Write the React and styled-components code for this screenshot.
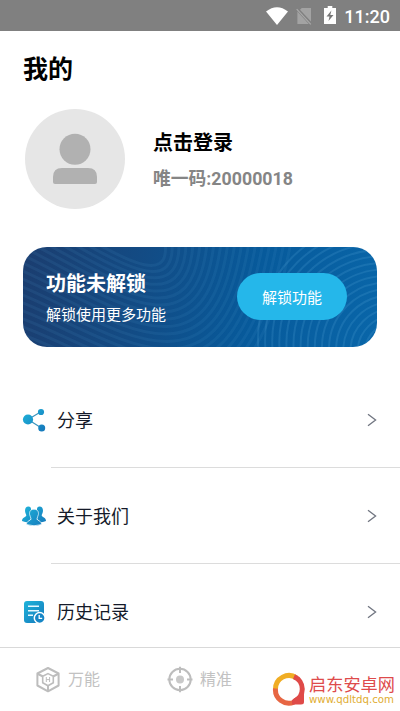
import React from "react";
import styled, { createGlobalStyle } from "styled-components";

const GlobalStyle = createGlobalStyle`
  * {
    box-sizing: border-box;
  }
  body {
    margin: 0;
    background: #fff;
    font-family: Roboto, "Noto Sans CJK SC", sans-serif;
  }
`;

const Screen = styled.div`
  display: flex;
  flex-direction: column;
  width: 100%;
  height: 711px;
  overflow: hidden;
  background: #fff;
`;

const StatusBar = styled.header`
  display: flex;
  flex: none;
  align-items: center;
  justify-content: flex-end;
  height: 31px;
  padding: 0 10px 0 0;
  background: #808080;
`;

const Clock = styled.span`
  margin: 3px 0 0 8px;
  color: #fff;
  font-size: 18px;
  font-weight: 500;
  line-height: 20px;
`;

const Content = styled.main`
  display: flex;
  flex: 1;
  flex-direction: column;
  min-height: 0;
`;

const Title = styled.h1`
  flex: none;
  margin: 21px 0 0 23px;
  color: #000;
  font-size: 25px;
  font-weight: 700;
  line-height: 36px;
`;

const Profile = styled.section`
  display: flex;
  flex: none;
  align-items: center;
  gap: 28px;
  height: 100px;
  margin: 21px 0 0 25px;
`;

const ProfileText = styled.div`
  display: flex;
  flex-direction: column;
  gap: 8px;
  padding-top: 1px;
`;

const LoginText = styled.div`
  color: #000;
  font-size: 20px;
  font-weight: 700;
  line-height: 30px;
`;

const UserCode = styled.div`
  color: #858585;
  font-size: 17.8px;
  font-weight: 700;
  line-height: 26px;
`;

const Card = styled.section`
  position: relative;
  display: flex;
  flex: none;
  align-items: center;
  justify-content: space-between;
  height: 100px;
  margin: 38px 23px 0;
  padding: 0 30px 0 23px;
  overflow: hidden;
  border-radius: 24px;
  background: linear-gradient(100deg, #1b3d6f 0%, #134b84 32%, #075a9b 65%, #0966a9 100%);
`;

const CardWaves = styled.svg`
  position: absolute;
  inset: 0;
`;

const CardText = styled.div`
  position: relative;
  color: #fff;
`;

const CardTitle = styled.div`
  font-size: 20px;
  font-weight: 700;
  line-height: 32px;
`;

const CardHint = styled.div`
  margin-top: 4px;
  font-size: 15px;
  line-height: 22px;
`;

const UnlockButton = styled.button`
  position: relative;
  width: 110px;
  height: 47px;
  margin-bottom: 2px;
  padding: 0;
  border: none;
  border-radius: 24px;
  background: #25b7ea;
  color: #fff;
  font-family: inherit;
  font-size: 15px;
`;

const Menu = styled.nav`
  display: flex;
  flex: none;
  flex-direction: column;
  margin-top: 25px;
`;

const MenuItem = styled.div`
  display: flex;
  align-items: center;
  height: 96px;
  padding: 0 23px 1px 22px;
`;

const MenuLabel = styled.span`
  flex: 1;
  margin-left: 11px;
  padding-top: 2px;
  color: #141a29;
  font-size: 18px;
  line-height: 26px;
`;

const Divider = styled.div`
  height: 1px;
  margin: -1px 0 0 51px;
  background: #dcdcdc;
`;

const TabBar = styled.footer`
  display: flex;
  flex: none;
  align-items: center;
  height: 64px;
  padding-left: 35px;
  border-top: 1px solid #d9d9d9;
  background: #fff;
`;

const Tab = styled.div`
  display: flex;
  align-items: center;
  gap: 7px;
  width: 132px;
  color: #c2c2c2;
  font-size: 16px;
  line-height: 24px;
`;

const Brand = styled.div`
  display: flex;
  align-items: center;
  margin: 18px 0 0 -27px;
`;

const BrandText = styled.div`
  display: flex;
  flex-direction: column;
  margin: 3px 0 0 3px;
  white-space: nowrap;
`;

const BrandName = styled.span`
  color: #de4b4b;
  font-size: 17.2px;
  line-height: 18px;
`;

const BrandUrl = styled.span`
  color: #dfad31;
  font-family: "DejaVu Sans", sans-serif;
  font-size: 10.2px;
  line-height: 11px;
`;

const NoSim = styled.svg`
  margin-left: 8px;
`;

const Battery = styled.svg`
  margin-left: 12px;
`;

const WifiIcon = () => (
  <svg width="22" height="18" viewBox="0 0 22 18">
    <path d="M0 4.5Q11-4 22 4.5L11 18z" fill="#fff" />
  </svg>
);

const NoSimIcon = () => (
  <NoSim width="16" height="18" viewBox="0 0 16 18">
    <path d="M5.8 1H15V14.6L4 2.8zM1.4 4.6L12.8 17H1.4z" fill="#a3a3a3" />
    <path d="M.7 2.2L14.8 17.4" stroke="#a9a9a9" strokeWidth="1.2" />
  </NoSim>
);

const BatteryIcon = () => (
  <Battery width="12" height="20" viewBox="0 0 12 20">
    <path d="M3.7 0h4.6v2H12v16H0V2h3.7z" fill="#fff" />
    <path d="M7.4 4.5L2.5 10.5h3L4.5 15l5-6H6.3z" fill="#777" />
  </Battery>
);

const Avatar = () => (
  <svg width="100" height="100" viewBox="0 0 100 100">
    <circle cx="50" cy="50" r="50" fill="#e6e6e6" />
    <circle cx="50" cy="40.3" r="15.5" fill="#b1b1b1" />
    <path d="M28 73V68Q28 59 37 59H63Q72 59 72 68V73Q72 75 70 75H30Q28 75 28 73z" fill="#b1b1b1" />
  </svg>
);

const Waves = () => (
  <CardWaves width="354" height="100" viewBox="0 0 354 100" fill="none">
    <g stroke="#5aa5d6" strokeOpacity="0.1" strokeWidth="3">
      {Array.from({ length: 19 }, (_, k) => (
        <path
          key={k}
          d={`M-5 ${8 * k - 50}C${60 + 2 * k} ${8 * k - 15} ${150 + 4 * k} ${55 + 10 * k} ${142 + 7 * k} -5`}
        />
      ))}
    </g>
    <g stroke="#5aa8de" strokeOpacity="0.2" strokeWidth="2">
      {Array.from({ length: 16 }, (_, k) => (
        <circle key={k} cx={350 + k * 1.6} cy={92 + k} r={115 - k * 5.5} />
      ))}
    </g>
  </CardWaves>
);

const Blues = ({ id }) => (
  <defs>
    <linearGradient id={id} x1="0" y1="0" x2="24" y2="24" gradientUnits="userSpaceOnUse">
      <stop stopColor="#20b8dc" />
      <stop offset="1" stopColor="#1474b9" />
    </linearGradient>
  </defs>
);

const ShareIcon = () => (
  <svg width="24" height="24" viewBox="0 0 24 24" fill="url(#share)">
    <Blues id="share" />
    <path d="M6 11.5L18.5 4M6 11.5L19.5 20" stroke="#3a94bd" strokeWidth="1.2" />
    <circle cx="6" cy="11.5" r="5.1" />
    <circle cx="19" cy="4" r="3.1" />
    <circle cx="19.7" cy="20" r="3.5" />
  </svg>
);

const PeopleIcon = () => (
  <svg width="24" height="24" viewBox="0 0 24 24" fill="url(#people)">
    <Blues id="people" />
    <path d="M6.5 2.5C3.5 2.5 2.8 5.2 3.1 7.6C3.3 9.5 4.2 10.3 4.3 11.5C4.2 13.3 0 13 0 17Q3 18.5 6 18L9 14.5V5Q9 2.5 6.5 2.5z" />
    <path d="M17.5 2.5C20.5 2.5 21.2 5.2 20.9 7.6C20.7 9.5 19.8 10.3 19.7 11.5C19.8 13.3 24 13 24 17Q21 18.5 18 18L15 14.5V5Q15 2.5 17.5 2.5z" />
    <path
      d="M12 5.2C8.5 5.2 7.2 7.6 7.6 10.5C7.8 12.4 9 13.2 9 14.8C8.9 17 4.5 16.3 4.5 20.5Q12 23 19.5 20.5C19.5 16.3 15.1 17 15 14.8C15 13.2 16.2 12.4 16.4 10.5C16.8 7.6 15.5 5.2 12 5.2z"
      stroke="#fff"
      strokeWidth="0.7"
    />
  </svg>
);

const HistoryIcon = () => (
  <svg width="24" height="24" viewBox="0 0 24 24" fill="none">
    <Blues id="history" />
    <rect x="2" y="1" width="20" height="22" rx="3" fill="url(#history)" />
    <path d="M6 6.2H17M6 10.8H17M6 15.3H11" stroke="#e7f8ff" strokeWidth="1.5" />
    <circle cx="17.7" cy="18" r="5.4" fill="#1686c6" stroke="#fff" strokeWidth="1.5" />
    <path d="M17.2 15V18.4H20.2" stroke="#fff" strokeWidth="1.3" />
  </svg>
);

const Chevron = () => (
  <svg width="10" height="14" viewBox="0 0 10 14" fill="none">
    <path d="M1 1.2L8.6 7L1 12.8" stroke="#707580" strokeWidth="1.3" />
  </svg>
);

const CubeIcon = () => (
  <svg width="26" height="27" viewBox="0 0 26 27" fill="none" stroke="#bdbdbd" strokeWidth="2">
    <path d="M13 2L23.6 7.5V19.5L13 25.3L2.4 19.5V7.5z" strokeLinejoin="round" />
    <path d="M3 8L8 10.5M23 8L18 10.5M13 20V25" />
    <path d="M13 7.6L18.3 10.3V16.7L13 19.8L7.7 16.7V10.3z" strokeWidth="1.6" />
    <path d="M11.3 11V16M14.6 11V16M11.3 13.6H14.6" strokeWidth="1" />
  </svg>
);

const TargetIcon = () => (
  <svg width="26" height="27" viewBox="0 0 26 27" fill="none" stroke="#bdbdbd" strokeWidth="2">
    <circle cx="13" cy="13.5" r="10.7" />
    <path d="M13 .8V7M13 20V26.2M.5 13.5H6M20 13.5H25.5" />
    <circle cx="13" cy="13.5" r="4" fill="#c9c9c9" stroke="none" />
  </svg>
);

const BrandLogo = () => (
  <svg width="34" height="34" viewBox="0 0 34 34" fill="none" strokeWidth="5">
    <path d="M3.5 17A13.5 13.5 0 0 1 24.5 5.8" stroke="#f0ad24" />
    <path d="M3.5 16.5A13.5 13.5 0 0 0 22 30.2" stroke="#e76643" />
    <path d="M22 4.6A13.5 13.5 0 0 1 22 29.5" stroke="#df4a48" />
    <path d="M20 28L27 23L32 17V30Q32 32.5 29 32.5H20z" fill="#df4a48" />
  </svg>
);

const items = [
  { label: "分享", Icon: ShareIcon },
  { label: "关于我们", Icon: PeopleIcon },
  { label: "历史记录", Icon: HistoryIcon },
];

const App = () => {
  return (
    <Screen>
      <GlobalStyle />
      <StatusBar>
        <WifiIcon />
        <NoSimIcon />
        <BatteryIcon />
        <Clock>11:20</Clock>
      </StatusBar>
      <Content>
        <Title>我的</Title>
        <Profile>
          <Avatar />
          <ProfileText>
            <LoginText>点击登录</LoginText>
            <UserCode>唯一码:20000018</UserCode>
          </ProfileText>
        </Profile>
        <Card>
          <Waves />
          <CardText>
            <CardTitle>功能未解锁</CardTitle>
            <CardHint>解锁使用更多功能</CardHint>
          </CardText>
          <UnlockButton>解锁功能</UnlockButton>
        </Card>
        <Menu>
          {items.map(({ label, Icon }, index) => (
            <React.Fragment key={label}>
              <MenuItem>
                <Icon />
                <MenuLabel>{label}</MenuLabel>
                <Chevron />
              </MenuItem>
              {index < items.length - 1 && <Divider />}
            </React.Fragment>
          ))}
        </Menu>
      </Content>
      <TabBar>
        <Tab>
          <CubeIcon />
          万能
        </Tab>
        <Tab>
          <TargetIcon />
          精准
        </Tab>
        <Brand>
          <BrandLogo />
          <BrandText>
            <BrandName>启东安卓网</BrandName>
            <BrandUrl>www.qdltdq.com</BrandUrl>
          </BrandText>
        </Brand>
      </TabBar>
    </Screen>
  );
};

export default App;
